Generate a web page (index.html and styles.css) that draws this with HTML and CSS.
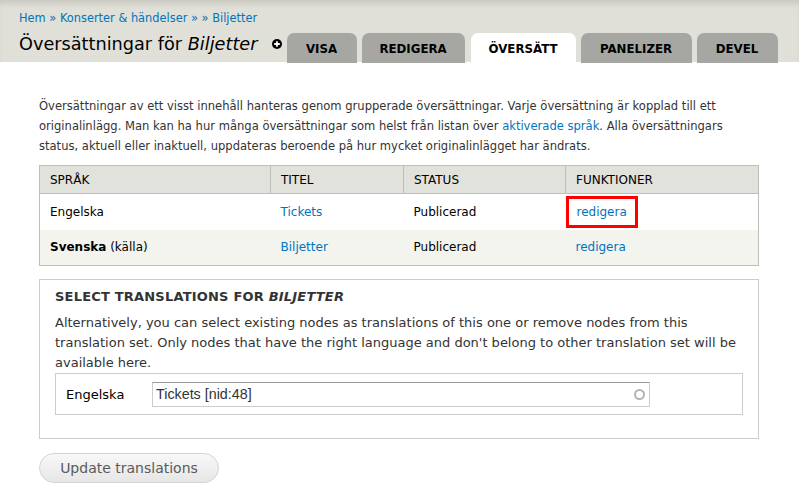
FILE: index.html
```html
<!DOCTYPE html>
<html lang="sv">
<head>
<meta charset="utf-8">
<title>Översättningar för Biljetter</title>
<link rel="stylesheet" href="styles.css">
</head>
<body>
<header class="branding">
  <nav class="breadcrumb"><a href="#">Hem</a> » <a href="#">Konserter &amp; händelser</a> <a href="#">»</a> » <a href="#">Biljetter</a></nav>
  <div class="title-row">
    <h1 class="page-title">Översättningar för <em>Biljetter</em></h1>
    <span class="shortcut"><svg width="10" height="10" viewBox="0 0 10 10"><circle cx="5" cy="5" r="5" fill="#000"/><path d="M5 2.2v5.6M2.2 5h5.6" stroke="#fff" stroke-width="1.8"/></svg></span>
    <ul class="tabs">
      <li class="tab"><a href="#">VISA</a></li>
      <li class="tab"><a href="#">REDIGERA</a></li>
      <li class="tab active"><a href="#">ÖVERSÄTT</a></li>
      <li class="tab"><a href="#">PANELIZER</a></li>
      <li class="tab"><a href="#">DEVEL</a></li>
    </ul>
  </div>
</header>
<main class="page">
  <p class="help">Översättningar av ett visst innehåll hanteras genom grupperade översättningar. Varje översättning är kopplad till ett originalinlägg. Man kan ha hur många översättningar som helst från listan över <a href="#">aktiverade språk</a>. Alla översättningars status, aktuell eller inaktuell, uppdateras beroende på hur mycket originalinlägget har ändrats.</p>
  <table class="trans">
    <thead>
      <tr><th class="c1">SPRÅK</th><th class="c2">TITEL</th><th class="c3">STATUS</th><th class="c4">FUNKTIONER</th></tr>
    </thead>
    <tbody>
      <tr class="odd"><td>Engelska</td><td><a href="#">Tickets</a></td><td>Publicerad</td><td><span class="highlight"><a href="#">redigera</a></span></td></tr>
      <tr class="even"><td><strong>Svenska</strong> (källa)</td><td><a href="#">Biljetter</a></td><td>Publicerad</td><td><a href="#">redigera</a></td></tr>
    </tbody>
  </table>
  <fieldset class="select-set">
    <div class="legend">SELECT TRANSLATIONS FOR <em>BILJETTER</em></div>
    <p class="desc">Alternatively, you can select existing nodes as translations of this one or remove nodes from this translation set. Only nodes that have the right language and don't belong to other translation set will be available here.</p>
    <div class="inner">
      <label class="lang">Engelska</label>
      <div class="input">
        <span class="val">Tickets [nid:48]</span>
        <span class="throbber"></span>
      </div>
    </div>
  </fieldset>
  <button class="btn">Update translations</button>
</main>
</body>
</html>
```
FILE: styles.css
```css
* { box-sizing: border-box; }
html, body { margin: 0; padding: 0; }
body {
  font-family: "DejaVu Sans", sans-serif;
  font-size: 13px;
  color: #333;
  background: #fff;
  width: 799px;
}
a { color: #0074bd; text-decoration: none; }

.branding {
  background: #e0e0d8;
  box-shadow: inset 0 6px 6px -3px rgba(0,0,0,0.12);
  padding: 11px 0 0 19px;
  height: 62px;
}
.breadcrumb {
  font-size: 11.4px;
  line-height: 14px;
  color: #0074bd;
}
.title-row {
  display: flex;
  align-items: flex-end;
  margin-top: 7px;
}
.page-title {
  margin: 0;
  font-size: 17.7px;
  font-weight: normal;
  color: #000;
  line-height: 24px;
  padding-bottom: 7px;
}
.page-title em { font-style: italic; }
.shortcut {
  display: flex;
  margin: 0 5px 0 14px;
  padding-bottom: 14px;
}
.tabs {
  list-style: none;
  margin: 0;
  padding: 0;
  display: flex;
  gap: 5px;
}
.tab a {
  display: block;
  background: #a6a7a2;
  color: #000;
  font-weight: bold;
  font-size: 11.8px;
  height: 30px;
  line-height: 32px;
  border-radius: 7px 7px 0 0;
  text-align: center;
}
.tab:nth-child(1) a { width: 70px; }
.tab:nth-child(2) a { width: 103px; }
.tab:nth-child(3) a { width: 105px; margin-left: 1px; background: #fff; }
.tab:nth-child(4) a { width: 111px; }
.tab:nth-child(5) a { width: 81px; }

.page { padding: 34px 40px 0 39px; }
.help {
  margin: 0;
  line-height: 20px;
  font-size: 11.55px;
  color: #333;
}
.trans {
  width: 720px;
  margin-top: 9px;
  border-collapse: collapse;
  border: 1px solid #bebfb9;
  font-size: 12px;
}
.trans th {
  background: #e1e2dc;
  font-weight: normal;
  text-align: left;
  font-size: 12px;
  height: 28px;
  padding: 1px 10px 0 10px;
  border: 1px solid #bebfb9;
  color: #000;
}
.trans .c1 { width: 231px; }
.trans .c2 { width: 133px; }
.trans .c3 { width: 162px; }
.trans td {
  height: 36px;
  padding: 0 10px;
  color: #000;
}
.trans tr.odd td { background: #fff; }
.trans tr.even td { background: #f3f4ee; }
.trans td strong { font-weight: bold; }
.highlight {
  display: inline-block;
  border: 3px solid #f00;
  padding: 6px 8px;
  margin-left: -10px;
}

.select-set {
  margin: 13px 0 0 0;
  padding: 9px 15px 23px 15px;
  border: 1px solid #ccc;
  width: 720px;
  min-width: 0;
}
.legend {
  font-weight: bold;
  text-transform: uppercase;
  font-size: 13px;
  color: #333;
  line-height: 16px;
  letter-spacing: 0.2px;
}
.desc {
  margin: 8px 0 0 0;
  line-height: 20px;
  font-size: 13px;
}
.inner {
  border: 1px solid #ccc;
  height: 42px;
  display: flex;
  align-items: center;
  padding: 0 0 0 10px;
}
.lang {
  width: 86px;
  color: #000;
  font-size: 13px;
  padding-top: 1px;
}
.input {
  width: 498px;
  height: 25px;
  border: 1px solid #ccc;
  border-top-color: #999;
  display: flex;
  align-items: center;
  justify-content: space-between;
  padding: 0 4px 0 3px;
}
.val {
  font-family: "Liberation Sans", Arial, sans-serif;
  font-size: 14.3px;
  color: #333;
}
.throbber {
  width: 11px;
  height: 11px;
  border: 2px solid #b3b3b3;
  border-radius: 50%;
}
.btn {
  margin-top: 14px;
  width: 180px;
  height: 30px;
  border: 1px solid #d4d4d4;
  border-radius: 15px;
  background: linear-gradient(#f8f8f8, #e6e6e6);
  font-family: "DejaVu Sans", sans-serif;
  font-size: 14px;
  color: #5a5a5a;
  padding: 0;
}
```
